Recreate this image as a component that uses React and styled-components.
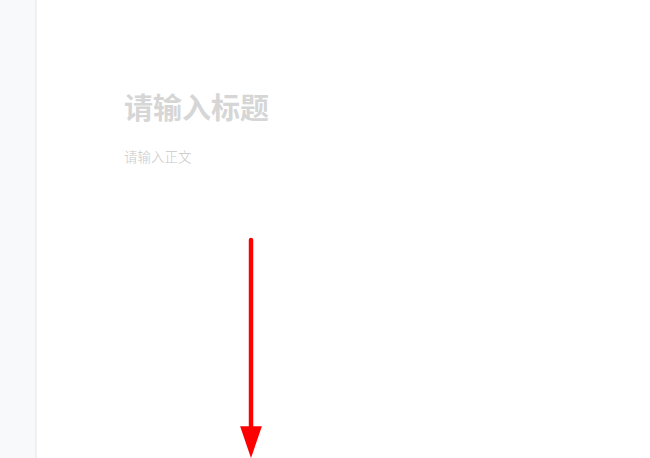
import styled, { createGlobalStyle } from "styled-components";

const GlobalStyle = createGlobalStyle`
    html, body {
        margin: 0;
        padding: 0;
        height: 100%;
        background: #ffffff;
        font-family: "Liberation Sans", "Noto Sans CJK SC", sans-serif;
    }
    #root {
        height: 100%;
    }
`;

const Layout = styled.div`
    display: flex;
    height: 100vh;
    overflow: hidden;
`;

const Sidebar = styled.aside`
    width: 35px;
    flex-shrink: 0;
    background: #f8f9fb;
    border-right: 2px solid #f0f0f0;
`;

const Editor = styled.main`
    flex: 1;
    padding: 86px 0 0 87px;
    display: flex;
    flex-direction: column;
`;

const TitleText = styled.div`
    font-family: "Noto Sans CJK SC", sans-serif;
    font-size: 29px;
    font-weight: 700;
    line-height: 40px;
    color: #d6d6d6;
`;

const BodyText = styled.div`
    margin-top: 20px;
    font-family: "Noto Sans CJK SC", sans-serif;
    font-size: 13.5px;
    font-weight: 300;
    line-height: 20px;
    color: #c8c8c8;
`;

const Arrow = styled.svg`
    display: block;
    margin-top: 70px;
    margin-left: 115px;
`;

export default function App() {
    return (
        <>
            <GlobalStyle />
            <Layout>
                <Sidebar />
                <Editor>
                    <TitleText>请输入标题</TitleText>
                    <BodyText>请输入正文</BodyText>
                    {/* 向下箭头标注 */}
                    <Arrow width="24" height="224" viewBox="0 0 24 224">
                        <line
                            x1="12"
                            y1="4"
                            x2="12"
                            y2="196"
                            stroke="#ff0000"
                            strokeWidth="4.5"
                            strokeLinecap="round"
                        />
                        <polygon points="1,192 23,192 12,224" fill="#ff0000" />
                    </Arrow>
                </Editor>
            </Layout>
        </>
    );
}
